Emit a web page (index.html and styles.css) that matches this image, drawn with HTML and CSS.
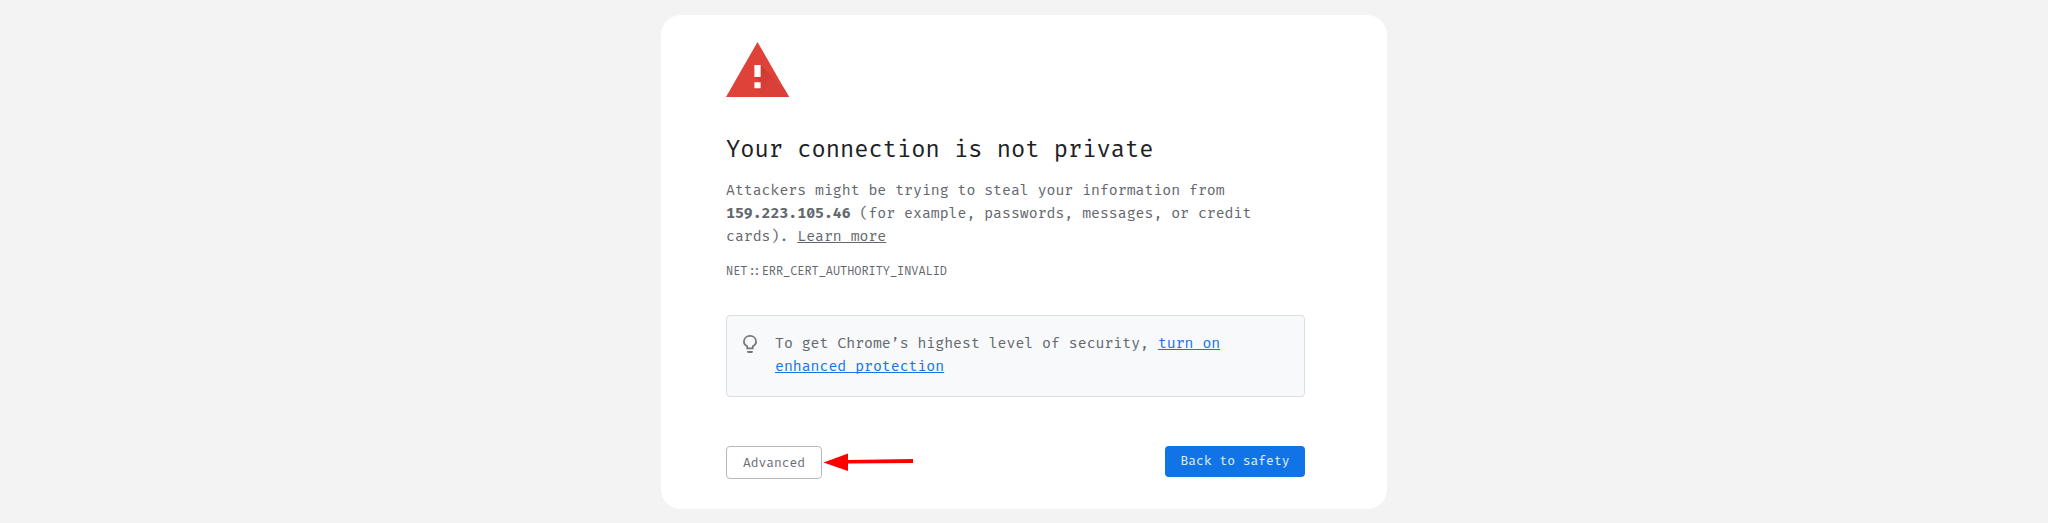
FILE: index.html
```html
<!DOCTYPE html>
<html lang="en">
<head>
    <meta charset="utf-8">
    <title>Privacy error</title>
    <link rel="stylesheet" href="styles.css">
</head>
<body>
    <div class="card">
        <svg class="warning-icon" viewBox="0 0 64 56">
            <defs>
                <linearGradient id="shade" gradientUnits="userSpaceOnUse" x1="32" y1="30" x2="46" y2="44">
                    <stop offset="0" stop-color="#c93b32"/>
                    <stop offset="1" stop-color="#d94138"/>
                </linearGradient>
                <clipPath id="triangle">
                    <path d="M31.5 0 L63 55 H0 Z"/>
                </clipPath>
            </defs>
            <path fill="#de4239" d="M31.5 0 L63 55 H0 Z"/>
            <g clip-path="url(#triangle)">
                <path fill="url(#shade)" d="M34.6 23 L67 55 H37 L28.5 46.3 L34.6 40 L28.5 35 L34.6 35 Z"/>
            </g>
            <path fill="#fff" d="M28.4 23H34.6V35H28.4ZM28.4 40.3H34.6V46.3H28.4Z"/>
        </svg>

        <h1>Your connection is not private</h1>
        <p class="message">Attackers might be trying to steal your information from <strong>159.223.105.46</strong> (for example, passwords, messages, or credit cards). <a class="learn-more">Learn more</a></p>
        <div class="error-code">NET::ERR_CERT_AUTHORITY_INVALID</div>

        <div class="tip">
            <svg class="bulb" viewBox="0 0 14 18">
                <path fill="none" stroke="#757575" stroke-width="1.7" d="M4.2 13.4V11.3C2 10.2 .9 8.7 .9 6.7C.9 3.4 3.5 .9 7 .9S13.1 3.4 13.1 6.7C13.1 8.7 12 10.2 9.8 11.3V13.4Z"/>
                <path fill="#757575" d="M4.2 16H9.8V17.1Q9.8 18 8.9 18H5.1Q4.2 18 4.2 17.1Z"/>
            </svg>
            <div class="tip-text">To get Chrome’s highest level of security, <a>turn on enhanced protection</a></div>
        </div>

        <div class="buttons">
            <div class="advanced">
                <button class="secondary">Advanced</button>
                <svg class="arrow" viewBox="0 0 92 20">
                    <path fill="#f00" d="M.5 10.6 L25 1.5 V7.9 L90 7 V11 L25 11.6 V19 Z"/>
                </svg>
            </div>
            <button class="primary">Back to safety</button>
        </div>
    </div>
</body>
</html>
```
FILE: styles.css
```css
body {
    margin: 0;
    padding-top: 15px;
    background: #f3f3f3;
    color: #64686d;
    font-family: 'Fira Code', 'Fira Mono', 'DejaVu Sans Mono', monospace;
    font-size: 14.48px;
    line-height: 23.2px;
}
.card {
    box-sizing: border-box;
    width: 726px;
    height: 494px;
    margin: 0 auto;
    padding: 27px 82px 0 65px;
    background: #fff;
    border-radius: 20px;
}
.warning-icon {
    display: block;
    width: 64px;
    height: 56px;
}
h1 {
    margin: 35px 0 12px;
    color: #202124;
    font-size: 23.16px;
    font-weight: normal;
    line-height: 34px;
}
.message {
    margin: 0;
}
a {
    text-decoration: underline;
    text-decoration-thickness: 1px;
    text-underline-offset: 1px;
    text-decoration-skip-ink: none;
}
.error-code {
    margin-top: 12px;
    font-size: 11.58px;
    line-height: 22px;
}
.tip {
    box-sizing: border-box;
    display: flex;
    height: 82px;
    margin-top: 32.4px;
    padding: 16px 16px 0 16px;
    background: #f8f9fb;
    border: 1px solid #dcdee2;
    border-radius: 4px;
}
.bulb {
    flex: none;
    width: 14px;
    height: 18px;
    margin: 3px 18px 0 0;
}
.tip-text a {
    color: #1a73e8;
}
.buttons {
    display: flex;
    justify-content: space-between;
    align-items: flex-start;
    margin-top: 49px;
}
.advanced {
    display: flex;
}
button {
    box-sizing: border-box;
    padding: 0;
    border-radius: 4px;
    font-family: inherit;
    font-size: 12.65px;
}
.secondary {
    width: 96px;
    height: 33px;
    background: #fff;
    border: 1px solid #b5b8bd;
    color: #696e75;
}
.primary {
    width: 140px;
    height: 31px;
    padding-bottom: 2px;
    background: #1174e6;
    border: none;
    color: #e3effc;
}
.arrow {
    width: 92px;
    height: 20px;
    margin: 6px 0 0 1px;
}
```
